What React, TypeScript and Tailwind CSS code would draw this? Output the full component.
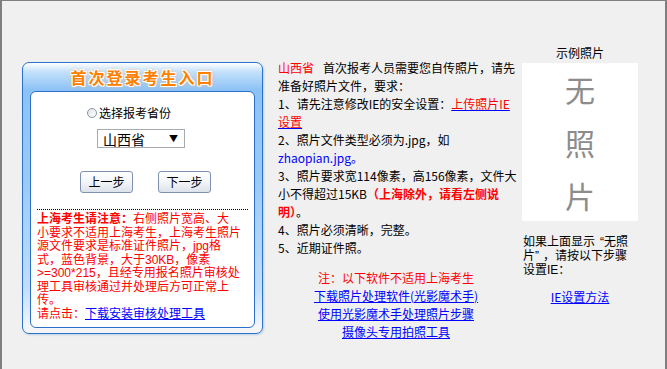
import React from "react";

const Btn = ({ label }: { label: string }) => (
  <div className="w-[53px] h-[22px] rounded-[3px] border border-[#7f90b0] bg-[linear-gradient(to_bottom,#ffffff_0%,#f4f5f8_50%,#dde2ea_100%)] flex items-center justify-center text-[12px] leading-none text-black">
    {label}
  </div>
);

export default function App() {
  return (
    <div className="w-[667px] h-[369px] bg-[#f0f0f0] border-l-2 border-t border-r-2 border-[#7f7f7f] font-['Noto_Sans_CJK_SC',sans-serif] text-[12px] text-black flex items-start overflow-hidden">
      {/* Left login box */}
      <div className="ml-[20px] mt-[61px] w-[241px] h-[272px] shrink-0 rounded-[7px] border border-[#2b72cc] bg-[linear-gradient(to_bottom,#ffffff_0px,#c3e0fb_9px,#8dc2f6_27px,#9ccaf6_120px,#c2def8_225px,#f3f5f8_262px,#f3f5f8_100%)] shadow-[1px_1px_2px_rgba(90,140,200,0.35)] flex flex-col">
        <div className="h-[28px] flex items-center justify-center">
          <span className="text-[16px] font-bold tracking-[2px] text-[#ff8000] leading-none [text-shadow:0_0_2px_#fff,1px_1px_0_#fff,-1px_-1px_0_#fff,1px_-1px_0_#fff,-1px_1px_0_#fff,0_0_4px_#ffb060]">
            首次登录考生入口
          </span>
        </div>
        <div className="mx-[7px] h-[237px] rounded-[6px] border border-[#2c6fc6] bg-white">
          <div className="mt-[14px] ml-[56px] flex items-center h-[14px] gap-[2px]">
            <div className="w-[10px] h-[10px] rounded-full border border-[#8c939c] bg-[linear-gradient(135deg,#dfe3e8,#ffffff)]" />
            <span className="leading-[14px] whitespace-nowrap">选择报考省份</span>
          </div>
          <div className="mt-[9px] ml-[66px] w-[88px] h-[19px] border border-[#a6abb2] flex items-center justify-between pl-[5px] pr-[6px]">
            <span className="text-[14px] leading-none">山西省</span>
            <span className="text-[9px] leading-none">▼</span>
          </div>
          <div className="mt-[23px] ml-[49px] flex gap-[25px]">
            <Btn label="上一步" />
            <Btn label="下一步" />
          </div>
          <div className="mt-[16px] mx-[6px] border-t border-dotted border-black pt-[3px] text-[#ff0000] leading-[13.5px] whitespace-nowrap font-['Liberation_Sans','Noto_Sans_CJK_SC',sans-serif]">
            <div>
              <span className="font-bold">上海考生请注意：</span>右侧照片宽高、大
            </div>
            <div>小要求不适用上海考生，上海考生照片</div>
            <div>源文件要求是标准证件照片，jpg格</div>
            <div>式，蓝色背景，大于30KB，像素</div>
            <div>&gt;=300*215，且经专用报名照片审核处</div>
            <div>理工具审核通过并处理后方可正常上</div>
            <div>传。</div>
            <div>
              请点击：
              <a href="#" className="text-[#0000ff] underline">
                下载安装审核处理工具
              </a>
            </div>
          </div>
        </div>
      </div>

      {/* Middle column */}
      <div className="ml-[15px] mt-[58px] w-[236px] shrink-0 leading-[18px] whitespace-nowrap">
        <div>
          <span className="text-[#ff0000]">山西省</span>
          <span className="ml-[9px]">首次报考人员需要您自传照片，请先</span>
        </div>
        <div>准备好照片文件，要求：</div>
        <div>
          1、请先注意修改IE的安全设置：
          <a href="#" className="text-[#ff0000] underline decoration-[#0000ff]">
            上传照片IE
          </a>
        </div>
        <div>
          <a href="#" className="text-[#ff0000] underline decoration-[#0000ff]">
            设置
          </a>
        </div>
        <div>2、照片文件类型必须为.jpg，如</div>
        <div>
          <span className="text-[#0000ff]">zhaopian.jpg。</span>
        </div>
        <div>3、照片要求宽114像素，高156像素，文件大</div>
        <div>
          小不得超过15KB<span className="text-[#ff0000] font-bold">（上海除外，请看左侧说</span>
        </div>
        <div>
          <span className="text-[#ff0000] font-bold">明）</span>。
        </div>
        <div>4、照片必须清晰，完整。</div>
        <div>5、近期证件照。</div>
        <div className="mt-[12px] flex flex-col items-center">
          <div className="text-[#ff0000]">注：以下软件不适用上海考生</div>
          <a href="#" className="text-[#0000ff] underline">
            下载照片处理软件(光影魔术手)
          </a>
          <a href="#" className="text-[#0000ff] underline">
            使用光影魔术手处理照片步骤
          </a>
          <a href="#" className="text-[#0000ff] underline">
            摄像头专用拍照工具
          </a>
        </div>
      </div>

      {/* Right column */}
      <div className="ml-[8px] mt-[45px] w-[116px] shrink-0">
        <div className="text-center leading-[14px]">示例照片</div>
        <div className="mt-[3px] h-[158px] bg-white flex flex-col items-center text-[30px] leading-[53px] text-[#8c8c8c]">
          <div>无</div>
          <div>照</div>
          <div>片</div>
        </div>
        <div className="mt-[13px] pl-[1px] pt-[1px] leading-[14px] whitespace-nowrap font-['Liberation_Sans','Noto_Sans_CJK_SC',sans-serif]">
          <div>
            如果上面显示<span className="ml-[5px]">“</span>无照
          </div>
          <div>
            片”<span className="ml-[4px]">，请按以下步骤</span>
          </div>
          <div>设置IE：</div>
        </div>
        <div className="mt-[13px] text-center leading-[14px]">
          <a href="#" className="text-[#0000ff] underline">
            IE设置方法
          </a>
        </div>
      </div>
    </div>
  );
}
